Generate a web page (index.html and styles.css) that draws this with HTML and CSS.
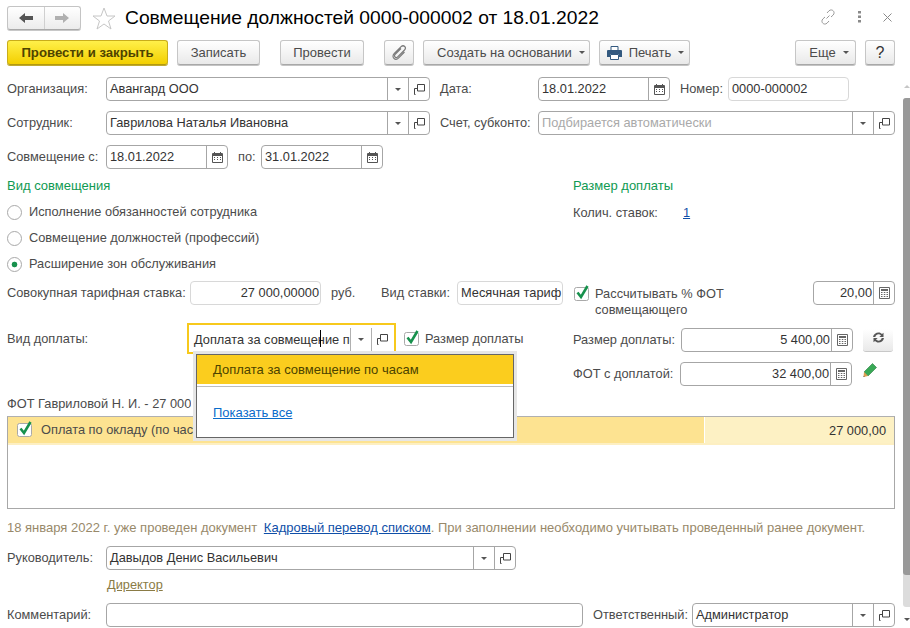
FILE: index.html
```html
<!DOCTYPE html>
<html lang="ru">
<head>
<meta charset="utf-8">
<title>Совмещение должностей</title>
<link rel="stylesheet" href="styles.css">
</head>
<body>
<svg class="defs" width="0" height="0">
  <symbol id="i-open" viewBox="0 0 11 11"><path d="M3.500 .5h7v6.500h-7z" fill="none" stroke="#444"/><path d="M3.500 4.500H.5v6h1" fill="none" stroke="#444"/></symbol>
  <symbol id="i-cal" viewBox="0 0 11 11"><path d="M.5 1.500h10v9h-10z" fill="#fff" stroke="#555"/><path d="M1 2h9v2H1z" fill="#555"/><path d="M2.500 0v2M8.500 0v2" stroke="#555"/><path d="M2 5.500h1M5 5.500h1M8 5.500h1M2 7.500h1M5 7.500h1M8 7.500h1" stroke="#555"/></symbol>
  <symbol id="i-calc" viewBox="0 0 11 12"><path d="M.5 .5h10v11H.5z" fill="#fff" stroke="#666"/><path d="M2 2h7v2H2z" fill="#666"/><path d="M2 5.500h1.500M4.800 5.500h1.500M7.500 5.500H9M2 7.500h1.500M4.800 7.500h1.500M7.500 7.500H9M2 9.500h1.500M4.800 9.500h1.500M7.500 9.500H9" stroke="#666"/></symbol>
  <symbol id="i-check" viewBox="0 0 16 16"><rect x=".5" y="2.500" width="14" height="13" rx="2" fill="#fff" stroke="#a9a9a9"/><path d="M3.500 7.500l3.500 4.500 6.500-11" fill="none" stroke="#17914d" stroke-width="2.600"/></symbol>
</svg>
<div class="window">
  <main class="main">
    <header class="head">
      <div class="nav">
        <span class="nav-cell"><svg width="14" height="10" viewBox="0 0 14 10"><path d="M0 5l6-5v3h8v4H6v3z" fill="#555"/></svg></span>
        <span class="nav-cell"><svg width="14" height="10" viewBox="0 0 14 10"><path d="M14 5L8 0v3H0v4h8v3z" fill="#b0b0b0"/></svg></span>
      </div>
      <svg class="star" width="24" height="23" viewBox="0 0 24 23"><path d="M12 1l3 8h8l-6.500 5 2.500 8-7-5-7 5 2.500-8L1 9h8z" fill="#fff" stroke="#c6c6c6"/></svg>
      <h1 class="title">Совмещение должностей 0000-000002 от 18.01.2022</h1>
      <div class="win-tools">
        <svg width="16" height="16" viewBox="0 0 16 16"><path d="M6.500 9.500l3-3M7 4l2-2.200c1.500-1.300 3.200-1 4.200 0s1.300 2.700 0 4.200L11 8M9 12l-2 2.200c-1.500 1.300-3.200 1-4.200 0s-1.300-2.700 0-4.200L5 8" fill="none" stroke="#9a9a9a"/></svg>
        <svg width="4" height="12" viewBox="0 0 4 12"><path d="M0 0h3v2.500H0zM0 4.500h3V7H0zM0 9h3v2.500H0z" fill="#8a8a8a"/></svg>
        <svg width="9" height="9" viewBox="0 0 9 9"><path d="M.5 .5l8 8M8.500 .5l-8 8" stroke="#8a8a8a"/></svg>
      </div>
    </header>

    <div class="toolbar">
      <button class="btn primary w161">Провести и закрыть</button>
      <button class="btn ml9 w83">Записать</button>
      <button class="btn ml20 w84">Провести</button>
      <button class="btn ml20 w30"><svg width="15" height="15" viewBox="0 0 15 15"><path d="M9 3.500l-5.800 5.800c-1 1-.9 2 -.2 2.700s1.700.8 2.700-.2L12.500 5c1.200-1.300 1.100-2.600.2-3.500S10.400.4 9.100 1.700L2.300 8.500c-1.700 1.700-1.600 3.600-.4 4.800s3.100 1.300 4.800-.4L12.500 7" fill="none" stroke="#7a7a7a" stroke-width="1.200"/></svg></button>
      <button class="btn ml9 w167 btn-base">Создать на основании<i class="caret cm"></i></button>
      <button class="btn ml9 w91 btn-print"><svg class="printer" width="15" height="14" viewBox="0 0 15 14"><path d="M4 .5h7v4H4z" fill="#fff" stroke="#33597f"/><path d="M0 5q0-1 1-1h13q1 0 1 1v6h-3V8H3v3H0z" fill="#33597f"/><path d="M3.500 8.500h8v5h-8z" fill="#fff" stroke="#33597f"/></svg>Печать<i class="caret cm"></i></button>
      <button class="btn mlauto w61 btn-more">Еще<i class="caret cm"></i></button>
      <button class="btn ml9 w30 q">?</button>
    </div>

    <div class="row r1">
      <label class="lab w99">Организация:</label>
      <div class="field w324"><span class="val">Авангард ООО</span><span class="fb"><i class="caret"></i></span><span class="fb"><svg class="ic"><use href="#i-open"/></svg></span></div>
      <label class="lab ml10 w98">Дата:</label>
      <div class="field w132"><span class="val">18.01.2022</span><span class="fb"><svg class="ic"><use href="#i-cal"/></svg></span></div>
      <label class="lab ml10 w48">Номер:</label>
      <div class="field w121 light"><span class="val">0000-000002</span></div>
    </div>
    <div class="row r2">
      <label class="lab w99">Сотрудник:</label>
      <div class="field w324"><span class="val">Гаврилова Наталья Ивановна</span><span class="fb"><i class="caret"></i></span><span class="fb"><svg class="ic"><use href="#i-open"/></svg></span></div>
      <label class="lab ml10 w98">Счет, субконто:</label>
      <div class="field w357"><span class="val hint">Подбирается автоматически</span><span class="fb"><i class="caret"></i></span><span class="fb"><svg class="ic"><use href="#i-open"/></svg></span></div>
    </div>
    <div class="row r2">
      <label class="lab w99">Совмещение с:</label>
      <div class="field w122"><span class="val">18.01.2022</span><span class="fb"><svg class="ic"><use href="#i-cal"/></svg></span></div>
      <label class="lab ml10 w23">по:</label>
      <div class="field w122"><span class="val">31.01.2022</span><span class="fb"><svg class="ic"><use href="#i-cal"/></svg></span></div>
    </div>

    <section class="split kinds">
      <div class="col-l">
        <h2 class="group">Вид совмещения</h2>
        <div class="radio"><i class="dot"></i>Исполнение обязанностей сотрудника</div>
        <div class="radio"><i class="dot"></i>Совмещение должностей (профессий)</div>
        <div class="radio"><i class="dot on"></i>Расширение зон обслуживания</div>
      </div>
      <div class="col-r">
        <h2 class="group">Размер доплаты</h2>
        <div class="rate"><span class="lab w110">Колич. ставок:</span><a class="link-num">1</a></div>
      </div>
    </section>

    <div class="row r5">
      <label class="lab w183">Совокупная тарифная ставка:</label>
      <div class="field w131 light"><span class="val num tight">27 000,00000</span></div>
      <span class="lab ml10 w50">руб.</span>
      <label class="lab w76">Вид ставки:</label>
      <div class="field w106 light"><span class="val clip tight3">Месячная тариф</span></div>
      <svg class="chk ml11 chk-r5"><use href="#i-check"/></svg>
      <span class="chk-text w218">Рассчитывать % ФОТ совмещающего</span>
      <div class="field w82"><span class="val num tight">20,00</span><span class="fb"><svg class="ic calc"><use href="#i-calc"/></svg></span></div>
    </div>

    <section class="split pay">
      <div class="col-l row-start">
        <label class="lab w180 lab-pay">Вид доплаты:</label>
        <div class="focus">
          <span class="val clip">Доплата за совмещение по часам</span><span class="fb"><i class="caret"></i></span><span class="fb"><svg class="ic"><use href="#i-open"/></svg></span>
          <i class="cursor"></i>
        </div>
        <svg class="chk ml8 chk-pay"><use href="#i-check"/></svg>
        <span class="lab chk-label">Размер доплаты</span>
      </div>
      <div class="col-r amounts">
        <div class="row">
          <label class="lab w108">Размер доплаты:</label>
          <div class="field w172"><span class="val num tight">5 400,00</span><span class="fb"><svg class="ic calc"><use href="#i-calc"/></svg></span></div>
          <button class="refresh"><svg width="13" height="11" viewBox="0 0 13 11"><path d="M1 5C1.500 2 4 .5 6.500 .5c1.600 0 2.700.6 3.500 1.500L11.500 .8V5H7.300L9 3.400C8.400 2.700 7.500 2.300 6.500 2.300 5 2.300 3.800 3.200 3.300 5zM12 6c-.5 3-3 4.500-5.500 4.500-1.600 0-2.700-.6-3.500-1.500L1.500 10.200V6h4.200L4 7.600c.6.700 1.500 1.100 2.500 1.100 1.500 0 2.700-.9 3.200-2.700z" fill="#555"/></svg></button>
        </div>
        <div class="row fot">
          <label class="lab w107">ФОТ с доплатой:</label>
          <div class="field w172"><span class="val num tight">32 400,00</span><span class="fb"><svg class="ic calc"><use href="#i-calc"/></svg></span></div>
          <svg class="pencil" width="14" height="14" viewBox="0 0 14 14"><path d="M9.500 .5l4 4-8.500 8.500-4-4z" fill="#39a956" stroke="#2a7a40" stroke-width=".6"/><path d="M1 9l4 4-4.500 1z" fill="#e0a050"/><path d="M.5 14l1.200-.3-.9-.9z" fill="#333"/></svg>
        </div>
      </div>
    </section>

    <div class="lab fot-title">ФОТ Гавриловой Н. И. - 27 000,00 руб.</div>
    <div class="table">
      <div class="t-row">
        <div class="t-main"><svg class="chk chk-t"><use href="#i-check"/></svg><span class="t-text">Оплата по окладу (по часам)</span></div>
        <div class="t-sum">27 000,00</div>
      </div>
    </div>

    <p class="note">18 января 2022 г. уже проведен документ <a class="link">Кадровый перевод списком</a>. При заполнении необходимо учитывать проведенный ранее документ.</p>

    <div class="row boss">
      <label class="lab w99">Руководитель:</label>
      <div class="field w410"><span class="val">Давыдов Денис Васильевич</span><span class="fb"><i class="caret"></i></span><span class="fb"><svg class="ic"><use href="#i-open"/></svg></span></div>
    </div>
    <a class="post">Директор</a>
    <div class="row comment">
      <label class="lab w99">Комментарий:</label>
      <div class="field w477"><span class="val"></span></div>
      <label class="lab ml10 w99">Ответственный:</label>
      <div class="field w203"><span class="val">Администратор</span><span class="fb"><i class="caret"></i></span><span class="fb"><svg class="ic"><use href="#i-open"/></svg></span></div>
    </div>

    <div class="popup">
      <div class="p-item">Доплата за совмещение по часам</div>
      <a class="p-all">Показать все</a>
    </div>
  </main>
  <aside class="scroll">
    <i class="s-up"></i>
    <div class="s-track"><div class="s-thumb"></div></div>
    <i class="s-down"></i>
  </aside>
</div>
</body>
</html>
```

FILE: styles.css
```css
* { box-sizing: border-box; }
html, body { margin: 0; padding: 0; background: #fff; }
body { font: 12.8px/16px "Liberation Sans", Arial, sans-serif; color: #4b4b4b; overflow: hidden; }
.defs { position: absolute; }
.window { display: flex; width: 910px; height: 628px; overflow: hidden; }
.main { position: relative; width: 903px; padding: 0 8px 0 7px; flex: none; }

.head { display: flex; align-items: flex-start; height: 40px; padding-top: 6px; }
.nav { display: flex; width: 74px; height: 24px; border: 1px solid #c4c4c4; border-bottom-color: #a9a9a9; border-radius: 3px; background: linear-gradient(#fff, #ececec); box-shadow: 0 1px 0 #c8c8c8; }
.nav-cell { flex: 1; display: flex; align-items: center; justify-content: center; }
.nav-cell + .nav-cell { border-left: 1px solid #d0d0d0; }
.star { margin: 1px 0 0 11px; flex: none; }
.title { margin: 0 0 0 9px; font: 400 19.25px/24px "Liberation Sans", Arial, sans-serif; color: #000; white-space: nowrap; }
.win-tools { margin-left: auto; margin-right: 3px; width: 72px; display: flex; align-items: center; justify-content: space-between; height: 22px; }

.toolbar { display: flex; height: 26px; }
.btn { display: inline-flex; align-items: center; justify-content: center; height: 25px; padding: 0; border: 1px solid #c6c6c6; border-bottom-color: #a8a8a8; border-radius: 3px; background: linear-gradient(#fff, #e9e9e9); box-shadow: 0 1px 0 #c4c4c4; font: 13px/16px "Liberation Sans", Arial, sans-serif; color: #4b4b4b; }
.primary { background: linear-gradient(#fff04a, #f3cf00); border-color: #c9ad1a; border-bottom-color: #b39a10; color: #4e4300; font-weight: 700; font-size: 13.200px; box-shadow: 0 1px 0 #bfa92f; }
.btn-base { justify-content: flex-start; padding-left: 13px; }
.btn-print { padding-left: 2px; }
.btn-more { padding-left: 7px; }
.q { font-size: 16px; color: #333; }
.printer { margin-right: 7px; }
.caret { display: inline-block; width: 0; height: 0; border: 3px solid transparent; border-top: 3px solid #555; border-bottom: 0; }
.cm { margin-left: 7px; }

.row { display: flex; align-items: center; }
.r1 { margin-top: 11px; }
.r2 { margin-top: 10px; }
.lab { display: block; flex: none; white-space: nowrap; }
.field { display: flex; flex: none; height: 24px; border: 1px solid #a6a6a6; border-radius: 4px; background: #fff; }
.light { border-color: #d8d8d8; }
.val { flex: 1; min-width: 0; padding: 0 3px; line-height: 22px; color: #333; white-space: nowrap; overflow: hidden; }
.hint { color: #a9a9a9; }
.num { text-align: right; }
.tight { padding-right: 1px; }
.tight3 { padding-left: 3px; padding-right: 0; }
.clip { overflow: hidden; }
.fb { flex: none; width: 21px; display: flex; align-items: center; justify-content: center; border-left: 1px solid #a6a6a6; }
.ic { width: 11px; height: 11px; display: block; }
.calc { height: 12px; }

.split { display: flex; }
.col-l { width: 566px; flex: none; }
.col-r { flex: 1; }
.kinds { margin-top: 9px; height: 103px; }
.group { margin: 0; font: 13px/16px "Liberation Sans", Arial, sans-serif; color: #0f9a52; height: 16px; }
.radio { display: flex; align-items: center; height: 26px; }
.radio:first-of-type { margin-top: 5px; }
.dot { flex: none; width: 15px; height: 15px; margin-right: 7px; border: 1px solid #a9a9a9; border-radius: 50%; background: #fff; }
.dot.on { background: radial-gradient(circle, #17914d 0 2.500px, #fff 3.200px); }
.rate { display: flex; margin-top: 11px; line-height: 16px; }
.link-num { color: #0f4fa8; text-decoration: underline; }

.r5 { align-items: flex-start; height: 42px; }
.r5 .lab { line-height: 24px; }
.chk { display: block; flex: none; width: 16px; height: 16px; }
.chk-r5 { margin-top: 4px; }
.chk-text { flex: none; margin-left: 5px; padding-top: 5px; line-height: 16px; }

.pay { height: 64px; }
.row-start { display: flex; align-items: flex-start; }
.lab-pay { line-height: 31px; }
.focus { position: relative; display: flex; flex: none; width: 209px; height: 31px; padding: 3px 2px; border: 2px solid #f7c91c; }
.focus .fb { height: 23px; border-left-color: #b0b0b0; }
.focus .val { padding: 0 3px 0 3px; line-height: 23px; overflow: hidden; }
.cursor { position: absolute; left: 131px; top: 5px; width: 1px; height: 17px; background: #000; }
.chk-pay { margin-top: 7px; }
.chk-label { margin-left: 5px; line-height: 31px; }
.amounts { padding-top: 4px; }
.refresh { width: 30px; height: 23px; margin: 2px 0 0 10px; padding: 0; border: 0; border-bottom: 1px solid #c8c8c8; border-radius: 3px; background: linear-gradient(#fff, #e9e9e9); display: flex; align-items: center; justify-content: center; }
.refresh svg { margin-top: -6px; }
.fot { margin-top: 10px; }
.pencil { margin: -8px 0 0 11px; }

.fot-title { margin-top: 9px; height: 20px; width: 184px; overflow: hidden; }
.table { height: 93px; border: 1px solid #a8a8a8; border-top-color: #b0b0b0; }
.t-row { display: flex; height: 28px; border-bottom: 2px solid #fdefc2; }
.t-main { width: 697px; flex: none; display: flex; align-items: center; padding-left: 9px; background: #fde391; border-right: 1px solid #fff; color: #4b4b4b; }
.t-text { margin-left: 8px; width: 152px; overflow: hidden; white-space: nowrap; }
.chk-t { margin-top: -2px; }
.t-sum { flex: 1; background: #fdf1c4; text-align: right; line-height: 27px; padding-right: 8px; color: #333; }

.note { margin: 11px 0 0; height: 16px; font-size: 13px; color: #98896a; white-space: nowrap; }
.link { margin-left: 3px; color: #0f4fa8; text-decoration: underline; }
.boss { margin-top: 10px; }
.post { display: block; margin: 7px 0 0 100px; height: 16px; color: #8a7b45; text-decoration: underline; }
.comment { margin-top: 10px; }

.popup { position: absolute; left: 196px; top: 354px; width: 318px; height: 84px; font-size: 13px; background: #fff; border: 1px solid #666; box-shadow: 0 0 0 3px #e6e6e6; z-index: 2; }
.p-item { height: 29px; padding-left: 16px; line-height: 29px; background: #fbcd1e; color: #4b4300; }
.p-all { display: block; margin-top: 2px; padding: 18px 0 0 16px; border-top: 1px solid #bdbdbd; color: #0a6ccb; text-decoration: underline; }

.scroll { flex: none; width: 7px; height: 628px; display: flex; flex-direction: column; }
.s-up { margin-top: 85px; width: 0; height: 0; border: 3px solid transparent; border-bottom: 3px solid #c6c6c6; border-top: 0; margin-left: 1px; }
.s-track { margin-top: 10px; height: 509px; background: #dcdcdc; border-radius: 3px 0 0 3px; }
.s-thumb { height: 477px; background: #999; border-radius: 3px 0 0 3px; }
.s-down { margin-top: 11px; width: 0; height: 0; border: 3px solid transparent; border-top: 3px solid #555; border-bottom: 0; margin-left: 1px; }

.ml8 { margin-left: 8px; } .ml9 { margin-left: 9px; } .ml10 { margin-left: 10px; } .ml11 { margin-left: 11px; } .ml20 { margin-left: 20px; }
.mlauto { margin-left: auto; }
.w23 { width: 23px; } .w30 { width: 30px; } .w48 { width: 48px; } .w50 { width: 50px; } .w61 { width: 61px; } .w76 { width: 76px; } .w82 { width: 82px; } .w83 { width: 83px; } .w84 { width: 84px; } .w91 { width: 91px; } .w98 { width: 98px; } .w99 { width: 99px; } .w106 { width: 106px; } .w107 { width: 107px; } .w108 { width: 108px; } .w110 { width: 110px; } .w121 { width: 121px; } .w122 { width: 122px; } .w131 { width: 131px; } .w132 { width: 132px; } .w161 { width: 161px; } .w167 { width: 167px; } .w172 { width: 172px; } .w180 { width: 180px; } .w183 { width: 183px; } .w203 { width: 203px; } .w218 { width: 218px; } .w324 { width: 324px; } .w357 { width: 357px; } .w410 { width: 410px; } .w477 { width: 477px; }
```
